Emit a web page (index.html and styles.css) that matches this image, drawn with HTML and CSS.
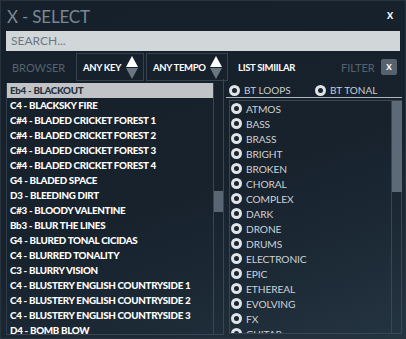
FILE: index.html
```html
<!DOCTYPE html>
<html>
<head>
<meta charset="utf-8">
<link rel="stylesheet" href="styles.css">
</head>
<body>
<div class="window">
  <div class="header">
    <span class="title">X - SELECT</span>
    <span class="close">X</span>
  </div>
  <div class="search">SEARCH...</div>
  <div class="toolbar">
    <span class="browser">BROWSER</span>
    <div class="dropdown key">
      <span class="dd-label">ANY KEY</span>
      <svg class="dd-arrow" width="12" height="23" viewBox="0 0 12 23"><polygon points="6,0 12,11 0,11" fill="#ffffff"/><polygon points="0,12 12,12 6,23" fill="#6a7682"/></svg>
    </div>
    <div class="dropdown tempo">
      <span class="dd-label">ANY TEMPO</span>
      <svg class="dd-arrow" width="12" height="23" viewBox="0 0 12 23"><polygon points="6,0 12,11 0,11" fill="#ffffff"/><polygon points="0,12 12,12 6,23" fill="#6a7682"/></svg>
    </div>
    <span class="similar">LIST SIMIILAR</span>
    <span class="filter">FILTER</span>
    <span class="xbtn">X</span>
  </div>
  <div class="main">
    <div class="left">
      <div class="list">
        <div class="row sel">Eb4 - BLACKOUT</div>
        <div class="row">C4 - BLACKSKY FIRE</div>
        <div class="row">C#4 - BLADED CRICKET FOREST 1</div>
        <div class="row">C#4 - BLADED CRICKET FOREST 2</div>
        <div class="row">C#4 - BLADED CRICKET FOREST 3</div>
        <div class="row">C#4 - BLADED CRICKET FOREST 4</div>
        <div class="row">G4 - BLADED SPACE</div>
        <div class="row">D3 - BLEEDING DIRT</div>
        <div class="row">C#3 - BLOODY VALENTINE</div>
        <div class="row">Bb3 - BLUR THE LINES</div>
        <div class="row">G4 - BLURED TONAL CICIDAS</div>
        <div class="row">C4 - BLURRED TONALITY</div>
        <div class="row">C3 - BLURRY VISION</div>
        <div class="row">C4 - BLUSTERY ENGLISH COUNTRYSIDE 1</div>
        <div class="row">C4 - BLUSTERY ENGLISH COUNTRYSIDE 2</div>
        <div class="row">C4 - BLUSTERY ENGLISH COUNTRYSIDE 3</div>
        <div class="row">D4 - BOMB BLOW</div>
      </div>
      <div class="lscroll"><div class="lthumb"></div></div>
    </div>
    <div class="right">
      <div class="tabs">
        <span class="opt"><span class="radio"></span>BT LOOPS</span>
        <span class="opt"><span class="radio"></span>BT TONAL</span>
      </div>
      <div class="tags">
        <div class="taglist">
          <div class="tag"><span class="radio"></span>ATMOS</div>
          <div class="tag"><span class="radio"></span>BASS</div>
          <div class="tag"><span class="radio"></span>BRASS</div>
          <div class="tag"><span class="radio"></span>BRIGHT</div>
          <div class="tag"><span class="radio"></span>BROKEN</div>
          <div class="tag"><span class="radio"></span>CHORAL</div>
          <div class="tag"><span class="radio"></span>COMPLEX</div>
          <div class="tag"><span class="radio"></span>DARK</div>
          <div class="tag"><span class="radio"></span>DRONE</div>
          <div class="tag"><span class="radio"></span>DRUMS</div>
          <div class="tag"><span class="radio"></span>ELECTRONIC</div>
          <div class="tag"><span class="radio"></span>EPIC</div>
          <div class="tag"><span class="radio"></span>ETHEREAL</div>
          <div class="tag"><span class="radio"></span>EVOLVING</div>
          <div class="tag"><span class="radio"></span>FX</div>
          <div class="tag"><span class="radio"></span>GUITAR</div>
        </div>
        <div class="rscroll"><div class="rthumb"></div></div>
      </div>
    </div>
  </div>
</div>
</body>
</html>
```

FILE: styles.css
```css
* { box-sizing: border-box; }
html, body { margin: 0; padding: 0; }
body {
  width: 406px;
  height: 339px;
  overflow: hidden;
  font-family: Lato, "Noto Sans", sans-serif;
  background: #15202b;
}
.window {
  width: 406px;
  height: 339px;
  border: 1px solid #27333f;
  background: linear-gradient(160deg, #15202b 0%, #17222d 55%, #1d2b37 80%, #243440 100%);
  display: flex;
  flex-direction: column;
  overflow: hidden;
}
.header {
  height: 30px;
  display: flex;
  align-items: center;
  justify-content: space-between;
  padding: 0 12px 0 6px;
}
.title {
  font-size: 17px;
  font-weight: 400;
  color: #7b8894;
  letter-spacing: -0.2px;
  margin-top: 1px;
}
.close {
  font-size: 9px;
  font-weight: 900;
  color: #ffffff;
  margin-top: -1px;
}
.search {
  margin: 0 5px;
  height: 20px;
  background: #d1d6d9;
  color: #6b7884;
  font-size: 12px;
  line-height: 20px;
  padding-left: 5px;
}
.toolbar {
  margin-top: 2px;
  height: 28px;
  display: flex;
  align-items: center;
  padding-left: 11px;
}
.browser {
  font-size: 11px;
  color: #56636e;
  width: 64px;
}
.dropdown {
  height: 28px;
  border: 1px solid #36434f;
  display: flex;
  align-items: center;
  justify-content: space-between;
  padding: 0 5px 0 6px;
}
.key { width: 68px; margin-right: 2px; }
.tempo { width: 82px; }
.dd-label {
  font-size: 9.5px;
  font-weight: 700;
  color: #ffffff;
  letter-spacing: -0.3px;
}
.dd-arrow { display: block; }
.similar {
  margin-left: 10px;
  font-size: 9.5px;
  font-weight: 700;
  color: #ffffff;
  letter-spacing: -0.3px;
  width: 103px;
}
.filter {
  font-size: 11px;
  color: #56636e;
  width: 40px;
}
.xbtn {
  width: 16px;
  height: 16px;
  background: #56636f;
  border-radius: 2px;
  color: #ffffff;
  font-size: 8px;
  font-weight: 900;
  display: flex;
  align-items: center;
  justify-content: center;
}
.main {
  margin-top: 2px;
  display: flex;
  padding-left: 5px;
  height: 252px;
}
.left {
  display: flex;
  height: 252px;
}
.list {
  width: 208px;
  border-left: 1px solid #2f3c48;
  border-bottom: 1px solid #3a4652;
  border-right: 1px solid #3a4652;
  overflow: hidden;
}
.row {
  height: 15px;
  line-height: 15px;
  font-size: 9.8px;
  font-weight: 900;
  color: #ffffff;
  padding-left: 3px;
  white-space: nowrap;
  letter-spacing: -0.3px;
}
.row.sel {
  background: #c0c4c7;
  color: #26323c;
}
.lscroll {
  width: 10px;
  margin-top: -4px;
  border-right: 1px solid #3a4652;
  border-bottom: 1px solid #3a4652;
  position: relative;
}
.lthumb {
  position: absolute;
  left: 0;
  top: 112px;
  width: 9px;
  height: 21px;
  background: #586773;
}
.right {
  margin-left: 2px;
  width: 176px;
  display: flex;
  flex-direction: column;
}
.tabs {
  height: 15px;
  border-bottom: 1px solid #aeb6bc;
  display: flex;
  align-items: center;
  padding-left: 3px;
}
.opt {
  display: flex;
  align-items: center;
  font-size: 10px;
  color: #c9ced2;
  width: 86px;
}
.radio {
  width: 11px;
  height: 11px;
  border-radius: 50%;
  border: 3px solid #e1e4e7;
  background: #1a2530;
  margin-right: 4px;
  flex: none;
}
.tags {
  margin-top: 2px;
  margin-left: 3px;
  height: 234px;
  display: flex;
  border-left: 1px solid #3a4652;
  border-top: 1px solid #3a4652;
  border-bottom: 1px solid #3a4652;
}
.taglist {
  flex: 1;
  overflow: hidden;
  padding-left: 1px;
}
.tag {
  height: 15px;
  display: flex;
  align-items: center;
  font-size: 10.2px;
  color: #cdd2d6;
  letter-spacing: -0.1px;
}
.rscroll {
  width: 11px;
  border-left: 1px solid #3a4652;
  border-right: 1px solid #3a4652;
  position: relative;
}
.rthumb {
  position: absolute;
  left: 0;
  top: 0;
  width: 10px;
  height: 91px;
  background: #5b6a76;
}
```
